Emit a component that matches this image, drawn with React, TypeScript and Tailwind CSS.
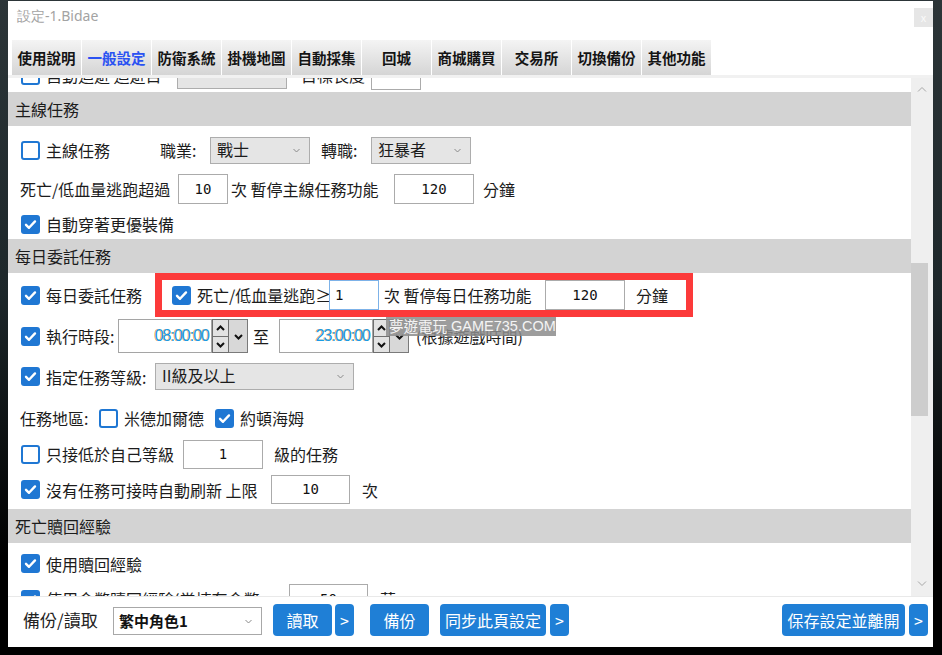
import React from 'react';

function Check({ on = false, className = '' }: { on?: boolean; className?: string }) {
  if (!on) {
    return <span className={`block h-[19px] w-[19px] shrink-0 rounded-[3px] border-2 border-[#1f77d3] bg-white ${className}`} />;
  }
  return (
    <span className={`flex h-[19px] w-[19px] shrink-0 items-center justify-center rounded-[3px] bg-[#1f77d3] ${className}`}>
      <svg width="13" height="13" viewBox="0 0 13 13">
        <path d="M2 6.8l3 3L11 3.4" fill="none" stroke="#fff" strokeWidth="2.4" strokeLinecap="round" strokeLinejoin="round" />
      </svg>
    </span>
  );
}

function Caret({ color = '#8a8a8a' }: { color?: string }) {
  return (
    <svg width="7" height="5" viewBox="0 0 7 5" className="shrink-0">
      <path d="M0.5 1l3 3 3-3" fill="none" stroke={color} strokeWidth="1" />
    </svg>
  );
}

function Chev({ up = false }: { up?: boolean }) {
  return (
    <svg width="9" height="6" viewBox="0 0 9 6">
      <path d={up ? 'M1 5l3.5-3.5L8 5' : 'M1 1l3.5 3.5L8 1'} fill="none" stroke="#111" strokeWidth="2" />
    </svg>
  );
}

function NumBox({ v, className }: { v: string; className: string }) {
  return (
    <div
      className={`flex shrink-0 items-center justify-center border border-[#ababab] bg-white font-['DejaVu_Sans_Mono',monospace] text-[14px] text-[#111] ${className}`}
    >
      {v}
    </div>
  );
}

function Drop({ v, className }: { v: string; className: string }) {
  return (
    <div className={`flex shrink-0 items-center justify-between border border-[#adadad] pl-[6px] pr-[9px] ${className}`}>
      <span className="-mt-[3px] leading-[20px]">{v}</span>
      <Caret />
    </div>
  );
}

function TimeBox({ v }: { v: string }) {
  return (
    <div className="flex h-[34px] shrink-0">
      <div className="flex w-[94px] items-center justify-end border border-[#a5a5a5] bg-white pr-[2px] font-['Liberation_Sans',sans-serif] text-[16px] tracking-[-1px] text-[#1a9ce6] [text-shadow:-0.6px_0_0_#f2a33a]">
        {v}
      </div>
      <div className="flex w-[17px] flex-col">
        <div className="flex h-[18px] items-center justify-center border border-[#6f6f6f] bg-[#e2e2e2]">
          <Chev up />
        </div>
        <div className="flex h-[16px] items-center justify-center border border-t-0 border-[#6f6f6f] bg-[#e2e2e2]">
          <Chev />
        </div>
      </div>
      <div className="flex w-[19px] items-center justify-center border border-l-0 border-[#7a7a7a] bg-[#d8d8d8] pt-[2px]">
        <Chev />
      </div>
    </div>
  );
}

function Head({ t }: { t: string }) {
  return <div className="flex h-[34px] items-center bg-[#d3d3d3] pl-[7px] text-[16px] text-[#1c1c1c]">{t}</div>;
}

function Btn({ t, className }: { t: string; className: string }) {
  return (
    <div className={`flex h-[32px] shrink-0 items-center justify-center rounded-[4px] bg-[#1f7fd6] text-[16px] text-white ${className}`}>
      {t}
    </div>
  );
}

const tabs = ['使用說明', '一般設定', '防衛系統', '掛機地圖', '自動採集', '回城', '商城購買', '交易所', '切換備份', '其他功能'];

export default function App() {
  return (
    <div className="relative h-[655px] w-[942px] overflow-hidden whitespace-nowrap bg-[linear-gradient(180deg,#2c3538_0%,#1d272a_45%,#0c1011_68%,#000_85%)] pl-[8px] pt-[1px] font-['Noto_Sans_CJK_TC','Noto_Sans',sans-serif] text-[16px] text-[#1c1c1c]">
      <div className="flex h-[646px] w-[925px] flex-col bg-white">
        {/* title */}
        <div className="flex h-[39px] items-start justify-between">
          <span className="pl-[9px] pt-[5px] font-['Noto_Sans',sans-serif] text-[14px] leading-[20px] text-[#a3a3a3]">設定-1.Bidae</span>
          <div className="mt-[7px] flex h-[19px] w-[19px] items-center justify-center bg-[#e6e6e6] text-[11px] leading-none text-[#fafafa]">x</div>
        </div>

        {/* tabs */}
        <div className="flex h-[35px] gap-[1px] pl-[4px]">
          {tabs.map((t, i) => (
            <div
              key={t}
              className={`flex w-[69px] items-center justify-center bg-gradient-to-b from-[#f4f4f4] to-[#d5d5d5] text-[14.5px] font-bold ${i === 1 ? 'text-[#2a52f2]' : 'text-[#141414]'}`}
            >
              {t}
            </div>
          ))}
        </div>
        <div className="h-[3px] bg-[#f1f1f1]" />

        {/* scroll content */}
        <div className="flex h-[518px]">
          <div className="flex-1 overflow-hidden">
            <div className="-mt-[20px]">
              <div className="flex h-[34px] items-center">
                <Check className="ml-[13px]" />
                <span className="ml-[6px] w-[131px]">自動迴避 迴避目</span>
                <Drop v="* * * * *" className="h-[27px] w-[110px] bg-[#e5e5e5]" />
                <span className="w-[84px] pl-[14px]">目標長度</span>
                <NumBox v="" className="h-[29px] w-[50px]" />
              </div>

              <Head t="主線任務" />
              <div className="pt-[5px]">
                <div className="flex h-[38px] items-center">
                  <Check className="ml-[13px]" />
                  <span className="ml-[6px] w-[114px]">主線任務</span>
                  <span className="w-[50px]">職業:</span>
                  <Drop v="戰士" className="h-[27px] w-[100px] bg-[#e5e5e5]" />
                  <span className="w-[61px] pl-[11px]">轉職:</span>
                  <Drop v="狂暴者" className="h-[27px] w-[100px] bg-[#e5e5e5]" />
                </div>
                <div className="flex h-[40px] items-center">
                  <span className="ml-[12px] w-[158px]">死亡/低血量逃跑超過</span>
                  <NumBox v="10" className="h-[30px] w-[50px]" />
                  <span className="w-[166px] pl-[3px]">次 暫停主線任務功能</span>
                  <NumBox v="120" className="h-[30px] w-[80px]" />
                  <span className="pl-[9px]">分鐘</span>
                </div>
                <div className="flex h-[30px] items-center">
                  <Check on className="ml-[13px]" />
                  <span className="ml-[6px]">自動穿著更優裝備</span>
                </div>
              </div>

              <Head t="每日委託任務" />
              <div className="flex h-[44px] items-center">
                <Check on className="ml-[13px]" />
                <span className="ml-[6px] w-[109px]">每日委託任務</span>
                <div className="flex h-[44px] w-[538px] shrink-0 items-center border-[7px] border-[#fc3a3a] pl-[10px]">
                  <Check on />
                  <span className="ml-[6px] w-[132px]">死亡/低血量逃跑≥</span>
                  <div className="flex h-[30px] w-[50px] shrink-0 items-center border border-[#7db2e8] bg-white pl-[5px] font-['DejaVu_Sans_Mono',monospace] text-[14px] text-[#111]">
                    1
                  </div>
                  <span className="w-[166px] pl-[5px]">次 暫停每日任務功能</span>
                  <NumBox v="120" className="h-[30px] w-[80px]" />
                  <span className="pl-[11px]">分鐘</span>
                </div>
              </div>
              <div className="flex h-[38px] items-center">
                <Check on className="ml-[13px]" />
                <span className="ml-[6px] w-[72px]">執行時段:</span>
                <TimeBox v="08:00:00" />
                <span className="w-[31px] pl-[5px]">至</span>
                <TimeBox v="23:00:00" />
                <span className="pl-[7px]">(根據遊戲時間)</span>
              </div>
              <div className="flex h-[43px] items-center">
                <Check on className="ml-[13px]" />
                <span className="ml-[6px] w-[109px]">指定任務等級:</span>
                <Drop v="II級及以上" className="h-[27px] w-[199px] bg-[#e5e5e5]" />
              </div>
              <div className="flex h-[40px] items-center">
                <span className="ml-[12px] w-[79px]">任務地區:</span>
                <Check />
                <span className="ml-[6px] w-[91px]">米德加爾德</span>
                <Check on />
                <span className="ml-[6px]">約頓海姆</span>
              </div>
              <div className="flex h-[32px] items-center">
                <Check className="ml-[13px]" />
                <span className="ml-[6px] w-[137px]">只接低於自己等級</span>
                <NumBox v="1" className="h-[29px] w-[80px]" />
                <span className="pl-[11px]">級的任務</span>
              </div>
              <div className="flex h-[39px] items-center">
                <Check on className="ml-[13px]" />
                <span className="ml-[6px] w-[225px]">沒有任務可接時自動刷新 上限</span>
                <NumBox v="10" className="h-[29px] w-[79px]" />
                <span className="pl-[12px]">次</span>
              </div>

              <Head t="死亡贖回經驗" />
              <div className="flex h-[41px] items-center">
                <Check on className="ml-[13px]" />
                <span className="ml-[6px]">使用贖回經驗</span>
              </div>
              <div className="flex h-[30px] items-center">
                <Check on className="ml-[13px]" />
                <span className="ml-[6px] w-[243px]">使用金幣贖回經驗(當持有金幣:</span>
                <NumBox v="50" className="h-[30px] w-[79px]" />
                <span className="pl-[12px]">萬</span>
              </div>
            </div>
          </div>

          {/* scrollbar */}
          <div className="flex w-[22px] flex-col bg-[#efefef]">
            <div className="flex h-[20px] w-[22px] items-center justify-center pt-[2px]">
              <svg width="10" height="6" viewBox="0 0 10 6">
                <path d="M1 5.5L5 1.5l4 4" fill="none" stroke="#a6a6a6" strokeWidth="1" />
              </svg>
            </div>
            <div className="mt-[165px] h-[153px] w-[17px] bg-[#cdcdcd]" />
            <div className="mt-auto flex h-[20px] w-[22px] items-center justify-center pb-[4px]">
              <svg width="10" height="6" viewBox="0 0 10 6">
                <path d="M1 0.5l4 4 4-4" fill="none" stroke="#a6a6a6" strokeWidth="1" />
              </svg>
            </div>
          </div>
        </div>
        <div className="h-[1px] bg-[#e9e9e9]" />

        {/* bottom bar */}
        <div className="flex h-[50px] items-start pl-[15px] pr-[5px] pt-[7px]">
          <span className="flex h-[32px] w-[90px] items-center text-[17px] text-[#222]">備份/讀取</span>
          <div className="mt-[3px] flex h-[28px] w-[149px] shrink-0 items-center justify-between border border-[#a8a8a8] bg-white pl-[5px] pr-[9px]">
            <span className="text-[15px] font-bold leading-[20px] text-[#111]">繁中角色1</span>
            <Caret />
          </div>
          <Btn t="讀取" className="ml-[11px] w-[59px]" />
          <Btn t=">" className="ml-[3px] w-[19px]" />
          <Btn t="備份" className="ml-[16px] w-[59px]" />
          <Btn t="同步此頁設定" className="ml-[11px] w-[106px]" />
          <Btn t=">" className="ml-[4px] w-[19px]" />
          <Btn t="保存設定並離開" className="ml-auto w-[123px]" />
          <Btn t=">" className="ml-[4px] w-[19px]" />
        </div>
      </div>

      {/* watermark */}
      <div className="absolute left-[386px] top-[317px] flex h-[19px] w-[170px] items-center bg-[#8c8c8c]/85 pl-[3px] font-['Noto_Sans_CJK_TC',sans-serif] text-[14.5px] leading-none text-[#f4f4f4]">
        夢遊電玩 <span className="ml-[4px] font-['Liberation_Sans',sans-serif]">GAME735.COM</span>
      </div>
    </div>
  );
}
